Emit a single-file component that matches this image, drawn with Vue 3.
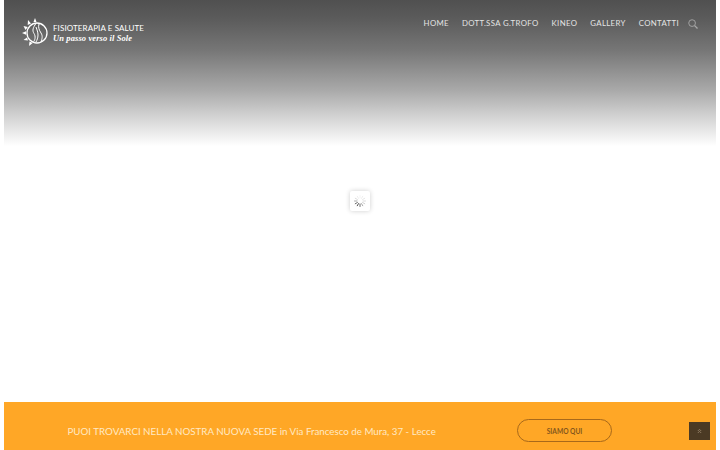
<template>
  <div class="page">
    <div class="frame">
      <header class="hero">
        <div class="logo">
          <svg class="mark" width="27" height="30" viewBox="0 0 27 30" fill="none" stroke="#fff">
            <circle cx="15" cy="15" r="10" stroke-width="1.300" />
            <path d="M14 5.500c-3 4-4 7-2 10s1 7-1 9M17 6c-1 3 0 6 2 9s1 6 0 9M14 9c1 3 2 5 2 8s-1 5-2 7" stroke-width="1" />
            <g fill="#fff" stroke="none">
              <path d="M0 15l4-1.800v3.600zM1.500 8l4.300 1-2.300 3zM6 2l3 3.500-3.300 1.500zM13 0l1.500 4h-3zM1.500 22l3.500-2.500 1 3zM7 28l.5-4.500 3.200 1.500z" />
            </g>
          </svg>
          <div class="brand">
            <span class="brand-name">FISIOTERAPIA E SALUTE</span>
            <span class="brand-tag">Un passo verso il Sole</span>
          </div>
        </div>
        <nav class="nav">
          <a v-for="item in items" :key="item">{{ item }}</a>
          <svg class="search" width="10" height="10" viewBox="0 0 11 11" fill="none" stroke="#a8a8a8" stroke-width="1">
            <circle cx="4.500" cy="4.500" r="3.700" />
            <path d="M7.300 7.300L10.500 10.500" stroke-width="1.500" />
          </svg>
        </nav>
      </header>

      <main class="stage">
        <div class="loader">
          <svg width="12" height="12" viewBox="0 0 12 12" stroke-width="1" stroke-linecap="round">
            <path
              v-for="(t, i) in ticks"
              :key="i"
              :d="t.d"
              :stroke="t.c"
            />
          </svg>
        </div>
      </main>

      <footer class="band">
        <p class="notice">PUOI TROVARCI NELLA NOSTRA NUOVA SEDE in Via Francesco de Mura, 37 - Lecce</p>
        <a class="cta">SIAMO QUI</a>
        <a class="top">
          <svg width="5" height="6" viewBox="0 0 5 6" fill="none" stroke="#a08a70" stroke-width="0.8">
            <path d="M.8 3L2.500 1.300 4.200 3M.8 5L2.500 3.300 4.200 5" />
          </svg>
        </a>
      </footer>
    </div>
  </div>
</template>

<script setup>
const items = ['HOME', 'DOTT.SSA G.TROFO', 'KINEO', 'GALLERY', 'CONTATTI']

const shades = ['#f4f4f4', '#eeeeee', '#e6e6e6', '#dcdcdc', '#cfcfcf', '#a8a8a8', '#6c6c6c', '#505050', '#6c6c6c', '#a8a8a8', '#dcdcdc', '#eeeeee']
const ticks = shades.map((c, i) => {
  const a = (i / 12) * Math.PI * 2
  const x = (r) => (6 + Math.sin(a) * r).toFixed(2)
  const y = (r) => (6 - Math.cos(a) * r).toFixed(2)
  return { c, d: `M${x(3)} ${y(3)}L${x(5.5)} ${y(5.5)}` }
})
</script>

<style>
html,
body {
  margin: 0;
  background: #fff;
}
</style>

<style scoped>
.page {
  width: 720px;
  height: 450px;
  overflow: hidden;
  background: #fff;
  padding: 0 4px;
  box-sizing: border-box;
  font-family: Lato, "Open Sans", sans-serif;
}
.frame {
  height: 100%;
  display: flex;
  flex-direction: column;
}
.hero {
  height: 146px;
  flex: none;
  display: flex;
  justify-content: space-between;
  align-items: flex-start;
  background: linear-gradient(to bottom, #505050 0, #5c5c5c 20px, #767676 50px, #a9a9a9 90px, #d8d8d8 120px, #ffffff 146px);
  padding: 18px 18px 0 18px;
  box-sizing: border-box;
}
.logo {
  display: flex;
  align-items: center;
  gap: 4px;
}
.mark {
  display: block;
}
.brand {
  display: flex;
  flex-direction: column;
  color: #fff;
  white-space: nowrap;
}
.brand-name {
  font-size: 8px;
  line-height: 10px;
  letter-spacing: 0.100px;
}
.brand-tag {
  font-family: "Liberation Serif", serif;
  font-style: italic;
  font-weight: 700;
  font-size: 8.500px;
  line-height: 10px;
  letter-spacing: 0.100px;
}
.nav {
  display: flex;
  align-items: center;
  gap: 13px;
  color: #e4e4e4;
  font-size: 7.800px;
  line-height: 11px;
  letter-spacing: 0.350px;
  white-space: nowrap;
}
.search {
  margin: 1px 0 0 -4px;
}
.stage {
  flex: 1;
  display: flex;
  justify-content: center;
  align-items: flex-start;
  padding-top: 45px;
}
.loader {
  width: 20px;
  height: 20px;
  display: flex;
  align-items: center;
  justify-content: center;
  background: #fff;
  border-radius: 2px;
  box-shadow: 0 0 5px rgba(0, 0, 0, 0.2);
}
.band {
  height: 48px;
  flex: none;
  display: flex;
  align-items: center;
  background: #ffa726;
  padding: 9px 6px 0 63.500px;
  box-sizing: border-box;
}
.notice {
  margin: 0;
  width: 449.500px;
  flex: none;
  color: #ffe9c4;
  font-size: 9.760px;
  white-space: nowrap;
}
.cta {
  width: 95px;
  height: 23px;
  box-sizing: border-box;
  display: flex;
  align-items: center;
  justify-content: center;
  border: 1px solid #a8691a;
  border-radius: 12px;
  color: #84561c;
  font-size: 6.600px;
  font-weight: 700;
}
.top {
  width: 21px;
  height: 18px;
  margin-left: auto;
  display: flex;
  align-items: center;
  justify-content: center;
  background: #4b3a24;
}
</style>
